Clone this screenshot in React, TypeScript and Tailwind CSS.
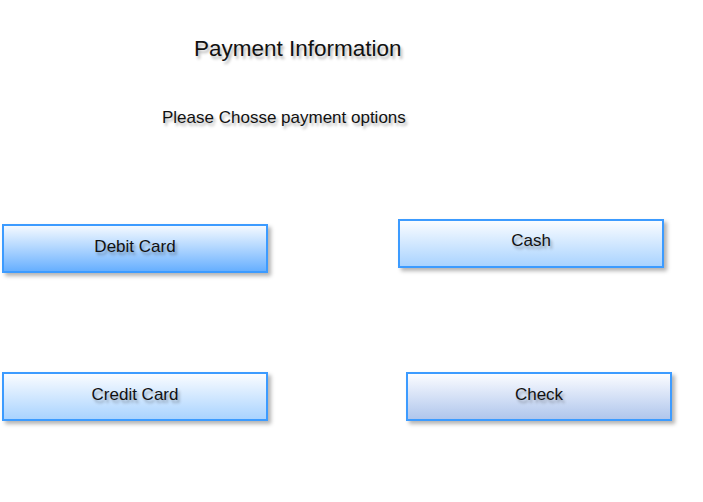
export default function App() {
  const shadowText = "[text-shadow:2px_3px_3px_rgba(0,0,0,0.3)]";
  const btn =
    "flex items-center justify-center w-[266px] h-[49px] border-2 border-[#3c9bff] shadow-[3px_3px_4px_rgba(0,0,0,0.3)] text-[17px] text-[#111] " +
    shadowText;

  return (
    <div className="w-[703px] h-[502px] bg-white font-['Liberation_Sans',Arial,sans-serif] overflow-hidden">
      <div className="pt-[35px] pl-[194px]">
        <h1 className={"text-[22.5px] leading-[28px] text-[#111] " + shadowText}>Payment Information</h1>
      </div>
      <div className="pt-[45px] pl-[162px]">
        <p className={"text-[17px] leading-[20px] text-[#111] " + shadowText}>Please Chosse payment options</p>
      </div>

      <div className="flex items-start pl-[2px] pt-[91px]">
        <div className={btn + " mt-[5px] pb-[4px] bg-gradient-to-b from-[#f4f9ff] to-[#66afff]"}>Debit Card</div>
        <div className={btn + " ml-[130px] pb-[6px] bg-gradient-to-b from-[#fafcff] to-[#a9d3ff]"}>Cash</div>
      </div>

      <div className="flex items-start pl-[2px] pt-[99px]">
        <div className={btn + " pb-[4px] bg-gradient-to-b from-[#fafcff] to-[#a9d3ff]"}>Credit Card</div>
        <div className={btn + " ml-[138px] pb-[4px] bg-gradient-to-b from-[#fbfcff] to-[#b0c6ec]"}>Check</div>
      </div>
    </div>
  );
}
